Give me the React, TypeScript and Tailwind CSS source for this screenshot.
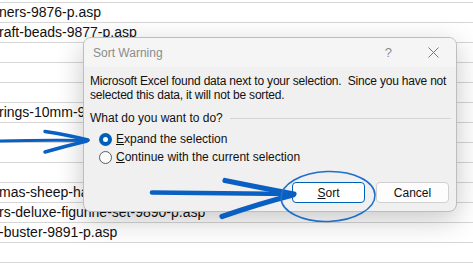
import React from "react";

const rows: string[] = [
  "le-christmas-tree-ornament-hangers-9875-p.asp",
  "ners-9876-p.asp",
  "raft-beads-9877-p.asp",
  "",
  "",
  "",
  "rings-10mm-9882-p.asp",
  "",
  "",
  "",
  "mas-sheep-hanging-decoration-9889-p.asp",
  "rs-deluxe-figurine-set-9890-p.asp",
  "-buster-9891-p.asp",
  "",
  "",
];

export default function App() {
  return (
    <div
      className="relative w-[473px] h-[280px] overflow-hidden bg-white"
      style={{ fontFamily: '"Liberation Sans", Arial, sans-serif' }}
    >
      {/* spreadsheet */}
      <div className="flex flex-col -mt-[17px]">
        {rows.map((t, i) => (
          <div
            key={i}
            className="h-[20px] border-b border-[#d6d6d6] flex items-center whitespace-nowrap text-[14px] text-[#111] -ml-[1px] leading-[19px]"
          >
            {t}
          </div>
        ))}
      </div>

      {/* dialog */}
      <div className="absolute left-[83px] top-[37px] w-[374px] h-[175px] rounded-[8px] border border-[#bdbdbd] bg-[#f0f0f0] overflow-hidden shadow-[0_8px_28px_rgba(0,0,0,0.22)] flex flex-col text-[12px] text-[#111]">
        <div className="h-[29px] bg-[#f5f5f5] flex items-center pl-[9px] pr-[17px] shrink-0">
          <span className="text-[#8c8c8c] text-[12px]">Sort Warning</span>
          <span className="ml-auto text-[#8c8c8c] text-[13px] mr-[36px]">?</span>
          <svg width="11" height="11" viewBox="0 0 11 11">
            <path d="M0.5 0.5 L10.5 10.5 M10.5 0.5 L0.5 10.5" stroke="#7a7a7a" strokeWidth="1" fill="none" />
          </svg>
        </div>
        <div className="flex flex-col pl-[6px] pr-[5px] pt-[7px]">
          <div className="leading-[14px] whitespace-pre tracking-[-0.2px]">
            {"Microsoft Excel found data next to your selection.  Since you have not\nselected this data, it will not be sorted."}
          </div>
          <div className="flex items-center mt-[9px] h-[14px]">
            <span className="whitespace-nowrap">What do you want to do?</span>
            <div className="flex-1 border-t border-[#d4d4d4] ml-[7px]"></div>
          </div>
          <div className="flex items-center h-[18px] mt-[5px] ml-[9px] gap-[4px]">
            <div className="w-[13px] h-[13px] rounded-full bg-[#005fb8] flex items-center justify-center">
              <div className="w-[5px] h-[5px] rounded-full bg-white"></div>
            </div>
            <span>
              <span className="underline">E</span>xpand the selection
            </span>
          </div>
          <div className="flex items-center h-[18px] ml-[9px] gap-[4px]">
            <div className="w-[13px] h-[13px] rounded-full border border-[#5c5c5c] bg-[#fbfbfb]"></div>
            <span>
              <span className="underline">C</span>ontinue with the current selection
            </span>
          </div>
          <div className="flex justify-end gap-[11px] mt-[16px] mr-[2px]">
            <div className="w-[73px] h-[21px] rounded-[4px] border border-[#005fb8] bg-white flex items-center justify-center">
              <span>
                <span className="underline">S</span>ort
              </span>
            </div>
            <div className="w-[73px] h-[21px] rounded-[4px] border border-[#d0d0d0] bg-[#fdfdfd] flex items-center justify-center">
              Cancel
            </div>
          </div>
        </div>
      </div>

      {/* annotations */}
      <svg
        className="absolute left-0 top-0 pointer-events-none"
        width="473"
        height="280"
        viewBox="0 0 473 280"
      >
        <g stroke="#0a5fc2" fill="none" strokeLinecap="round" strokeLinejoin="round">
          <path d="M-2 141 Q40 140 88 140.5" strokeWidth="3" />
          <path d="M45 131.5 Q68 135 88 140" strokeWidth="3.4" />
          <path d="M45 152 Q66 146 87 141" strokeWidth="3.4" />
          <path d="M152 192.5 Q220 193.5 293 194" strokeWidth="4.6" />
          <path d="M225 180.5 Q262 188 294 194" strokeWidth="5.2" />
          <path d="M222 216.5 Q258 204 293 195" strokeWidth="5.2" />
        </g>
        <ellipse
          cx="328"
          cy="196.5"
          rx="47"
          ry="25"
          transform="rotate(-2 328 196.5)"
          stroke="#1f6fcb"
          strokeWidth="1.6"
          fill="none"
        />
      </svg>
    </div>
  );
}
